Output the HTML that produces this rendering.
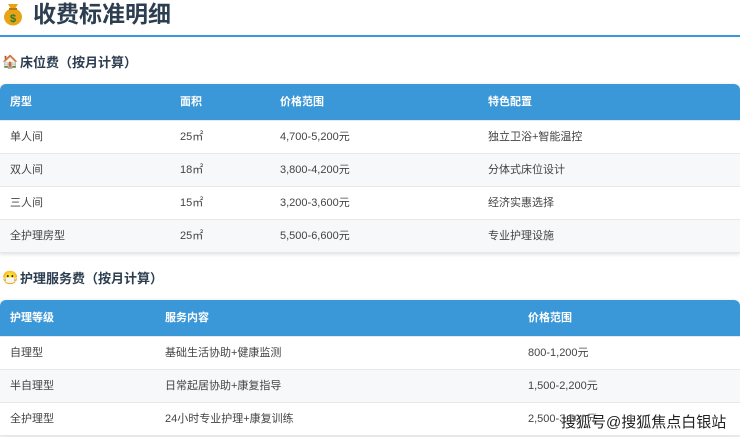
<!DOCTYPE html><html><head><meta charset="utf-8"><style>
*{margin:0;padding:0;box-sizing:border-box}
body{width:740px;height:437px;overflow:hidden;background:#fff;font-family:"Liberation Sans","Noto Sans CJK SC",sans-serif;color:#333;position:relative}
.t{position:absolute;left:33px;top:0;font-size:23px;font-weight:bold;color:#2c3e50;line-height:28px}
.bag{position:absolute;left:3px;top:2px;width:20px;height:24px}
.line{position:absolute;left:0;top:35px;width:740px;height:2px;background:#3a98d8}
.h2{position:absolute;left:20px;font-size:13px;font-weight:bold;color:#2c3e50}
.ic{position:absolute;left:2px;font-size:13px}
.tb{position:absolute;left:0;width:740px;border-radius:6px 6px 0 0;overflow:hidden;box-shadow:0 1px 4px rgba(0,0,0,.15)}
.r{position:relative;height:33px;font-size:11px;color:#444;border-bottom:1px solid #e8e8e8}
.r span{position:absolute;top:0;line-height:33px}
.hd{background:#3a98d8;color:#fff;font-weight:bold;height:37px}
.hd span{line-height:37px}
.g{background:#f7f8fa}
.wm{position:absolute;left:561px;top:411px;font-size:15px;color:#222;text-shadow:0 0 2px #fff,0 0 2px #fff}
</style></head><body>
<svg class="bag" viewBox="0 0 20 24"><ellipse cx="10" cy="15" rx="9" ry="8.5" fill="#e8a317"/><path d="M5 2h10l-3 5H8z" fill="#e8a317"/><rect x="6" y="6" width="8" height="2" fill="#b57812"/><text x="10" y="20" font-size="11" font-weight="bold" text-anchor="middle" fill="#2a7a2a" font-family="Liberation Sans">$</text></svg>
<div class="t">收费标准明细</div>
<div class="line"></div>
<div class="ic" style="top:54px">🏠</div>
<div class="h2" style="top:52px">床位费（按月计算）</div>
<div class="tb" style="top:84px">
<div class="r hd"><span style="left:10px">房型</span><span style="left:180px">面积</span><span style="left:280px">价格范围</span><span style="left:488px">特色配置</span></div>
<div class="r"><span style="left:10px">单人间</span><span style="left:180px">25㎡</span><span style="left:280px">4,700-5,200元</span><span style="left:488px">独立卫浴+智能温控</span></div>
<div class="r g"><span style="left:10px">双人间</span><span style="left:180px">18㎡</span><span style="left:280px">3,800-4,200元</span><span style="left:488px">分体式床位设计</span></div>
<div class="r"><span style="left:10px">三人间</span><span style="left:180px">15㎡</span><span style="left:280px">3,200-3,600元</span><span style="left:488px">经济实惠选择</span></div>
<div class="r g"><span style="left:10px">全护理房型</span><span style="left:180px">25㎡</span><span style="left:280px">5,500-6,600元</span><span style="left:488px">专业护理设施</span></div>
</div>
<div class="ic" style="top:270px">😷</div>
<div class="h2" style="top:268px">护理服务费（按月计算）</div>
<div class="tb" style="top:300px">
<div class="r hd"><span style="left:10px">护理等级</span><span style="left:165px">服务内容</span><span style="left:528px">价格范围</span></div>
<div class="r"><span style="left:10px">自理型</span><span style="left:165px">基础生活协助+健康监测</span><span style="left:528px">800-1,200元</span></div>
<div class="r g"><span style="left:10px">半自理型</span><span style="left:165px">日常起居协助+康复指导</span><span style="left:528px">1,500-2,200元</span></div>
<div class="r"><span style="left:10px">全护理型</span><span style="left:165px">24小时专业护理+康复训练</span><span style="left:528px">2,500-3,500元</span></div>
</div>
<div class="wm">搜狐号@搜狐焦点白银站</div>
</body></html>
